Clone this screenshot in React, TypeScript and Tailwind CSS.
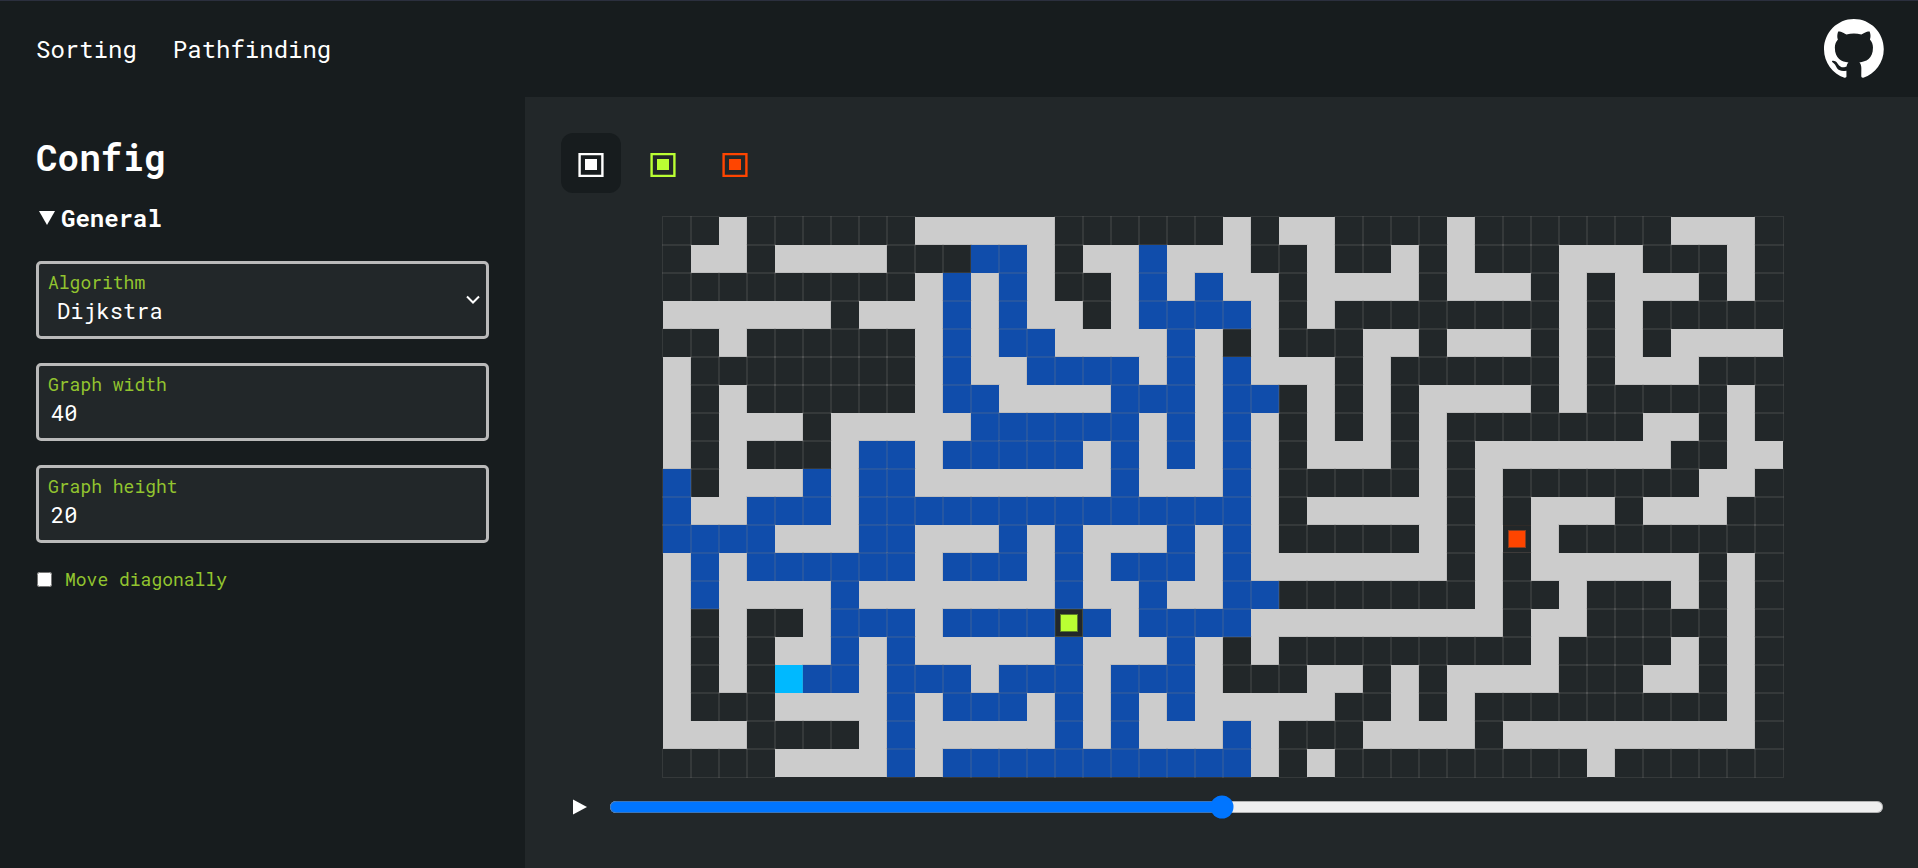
import { useState } from "react";
import type { ReactNode } from "react";

// Run-length rows: "." open, "#" wall, "o" visited, "c" current, "S" start, "T" target.
const ROWS = [
  "2. 1# 6. 5# 6. 1# 1. 2# 4. 1# 7. 3# 1.",
  "1. 2# 1. 4# 3. 2o 1# 1. 2# 1o 3# 2. 1# 2. 1# 1. 1# 3. 3# 3. 1# 1.",
  "9. 1# 1o 1# 1o 1# 2. 1# 1o 1# 1o 2# 1. 4# 1. 3# 1. 1# 1. 3# 1. 1# 1.",
  "6# 1. 3# 1o 1# 1o 2# 1. 1# 4o 1# 1. 1# 8. 1# 1. 1# 5.",
  "2. 1# 6. 1# 1o 1# 2o 4# 1o 1# 1. 1# 3. 2# 1. 3# 1. 1# 1. 1# 1. 4#",
  "1# 8. 1# 1o 2# 4o 1# 1o 1# 1o 3# 1. 1# 6. 1# 1. 3# 3.",
  "1# 1. 1# 6. 1# 2o 4# 3o 1# 2o 1. 1# 1. 1# 1. 4# 1. 1# 5. 1# 1.",
  "1# 1. 3# 1. 5# 6o 1# 1o 1# 1o 1# 1. 1# 1. 1# 1. 1# 7. 2# 1. 1# 1.",
  "1# 1. 1# 3. 1# 2o 1# 5o 1# 1o 1# 1o 1# 1o 1# 1. 3# 1. 1# 1. 7# 2. 2#",
  "1o 1. 3# 1o 1# 2o 7# 1o 3# 1o 1# 5. 1# 1. 1# 7. 2# 1.",
  "1o 2# 3o 1# 14o 1# 1. 5# 1. 1# 1. 3# 1. 3# 2.",
  "4o 3# 2o 3# 1o 1# 1o 3# 1o 1# 1o 1# 5. 1# 1. 1# 1T 1# 8.",
  "1# 1o 1# 6o 1# 3o 1# 1o 1# 3o 1# 1o 7# 1. 1# 1. 6# 1. 1# 1.",
  "1# 1o 4# 1o 7# 1o 2# 1o 2# 2o 7. 1# 2. 1# 3. 1# 1. 1# 1.",
  "1# 1. 1# 2. 1# 3o 1# 4o 1S 1o 1# 4o 9# 1. 2# 5. 1# 1.",
  "1# 1. 1# 1. 2# 1o 1# 1o 5# 1o 3# 1o 1# 1. 1# 9. 1# 4. 1# 1. 1# 1.",
  "1# 1. 1# 1. 1c 2o 1# 3o 1# 3o 1# 3o 1# 3. 2# 1. 1# 1. 4# 3. 2# 1. 1# 1.",
  "1# 3. 4# 1o 1# 3o 1# 1o 1# 1o 1# 1o 5# 2. 1# 1. 1# 9. 1# 1.",
  "3# 4. 1# 1o 5# 1o 1# 1o 3# 1o 1# 3. 4# 1. 9# 1.",
  "4. 4# 1o 1# 11o 1# 1. 1# 9. 1# 6.",
];

const MAZE = ROWS.map((row) =>
  row
    .split(" ")
    .map((run) => run.slice(-1).repeat(parseInt(run, 10)))
    .join(""),
);

const OUTLINE = "outline outline-1 outline-[#80808033]";

const CELL: Record<string, string> = {
  ".": OUTLINE,
  "#": "bg-[#cccccc]",
  o: `bg-[#104dab] ${OUTLINE}`,
  c: "bg-[#00b9ff]",
  S: `grid place-items-center border border-[#343b2c] bg-[#222729] ${OUTLINE}`,
  T: "grid place-items-center border-y border-[#2e2a28] bg-[#222729]",
};

function visitedEdges(r: number, c: number) {
  const left = c > 0 && MAZE[r][c - 1] === "o";
  const top = r > 0 && MAZE[r - 1][c] === "o";
  if (left && top) return "shadow-[inset_1px_1px_#80808033]";
  if (left) return "shadow-[inset_1px_0_#80808033]";
  if (top) return "shadow-[inset_0_1px_#80808033]";
  return "";
}

function Maze() {
  return (
    <div className="mx-auto grid w-max grid-cols-[repeat(40,28px)]">
      {MAZE.map((row, r) =>
        row.split("").map((kind, c) => (
          <div
            key={`${r}-${c}`}
            className={`h-7 w-7 ${CELL[kind]} ${kind === "o" ? visitedEdges(r, c) : ""}`}
          >
            {kind === "S" && <div className="size-[18px] border border-[#5c7f2a] bg-[#baff33]" />}
            {kind === "T" && <div className="size-[18px] border border-[#8a3c1e] bg-[#ff4500]" />}
          </div>
        )),
      )}
    </div>
  );
}

const TOOLS = [
  { name: "Wall", color: "text-white" },
  { name: "Start", color: "text-[#baff33]" },
  { name: "Target", color: "text-[#ff4500]" },
];

function Field({ id, label, children }: { id: string; label: string; children: ReactNode }) {
  return (
    <div className="relative flex flex-col gap-px rounded-[5px] border-3 border-[#bababa] bg-[#222729] px-[9px] pt-[6px] pb-[9px]">
      <label htmlFor={id} className="text-[18px] leading-6 text-[#92c42f]">
        {label}
      </label>
      {children}
    </div>
  );
}

export default function App() {
  const [tool, setTool] = useState("Wall");
  return (
    <div className="flex min-h-screen flex-col bg-[#171c1e] font-['Roboto_Mono','Liberation_Mono',monospace] text-white">
      <header className="flex h-[97px] items-center justify-between border-t border-[#2b2f3e] pr-[34px] pl-9">
        <nav className="flex gap-9 text-2xl">
          <a href="#sorting">Sorting</a>
          <a href="#pathfinding">Pathfinding</a>
        </nav>
        <a href="#github" aria-label="GitHub">
          <svg viewBox="0 0 98 98" className="size-[60px]" fill="currentColor" aria-hidden="true">
            <path d="M48.854 0C21.839 0 0 22 0 49.217c0 21.756 13.993 40.172 33.405 46.69 2.427.49 3.316-1.059 3.316-2.362 0-1.141-.08-5.052-.08-9.127-13.59 2.934-16.42-5.867-16.42-5.867-2.184-5.704-5.42-7.17-5.42-7.17-4.448-3.015.324-3.015.324-3.015 4.934.326 7.523 5.052 7.523 5.052 4.367 7.496 11.404 5.378 14.235 4.074.404-3.178 1.699-5.378 3.074-6.6-10.839-1.141-22.243-5.378-22.243-24.283 0-5.378 1.94-9.778 5.014-13.2-.485-1.222-2.184-6.275.486-13.038 0 0 4.125-1.304 13.426 5.052a46.97 46.97 0 0 1 12.214-1.63c4.125 0 8.33.571 12.213 1.63 9.302-6.356 13.427-5.052 13.427-5.052 2.67 6.763.97 11.816.485 13.038 3.155 3.422 5.015 7.822 5.015 13.2 0 18.905-11.404 23.06-22.324 24.283 1.78 1.548 3.316 4.481 3.316 9.126 0 6.6-.08 11.897-.08 13.526 0 1.304.89 2.853 3.316 2.364 19.412-6.52 33.405-24.935 33.405-46.691C97.707 22 75.788 0 48.854 0z" />
          </svg>
        </a>
      </header>

      <div className="flex flex-1">
        <aside className="w-[525px] shrink-0 p-9">
          <h1 className="text-[36px] leading-12 font-bold">Config</h1>
          <details open className="mt-[21px] [&>summary]:list-none">
            <summary className="flex items-center gap-[6px] text-2xl leading-8 font-bold">
              <svg viewBox="0 0 16 14" className="ml-[3px] h-[14px] w-4" fill="currentColor" aria-hidden="true">
                <path d="M0 0h16L8 14Z" />
              </svg>
              General
            </summary>
            <div className="mt-[27px] flex flex-col gap-6">
              <Field id="algorithm" label="Algorithm">
                <select
                  id="algorithm"
                  className="h-8 appearance-none bg-transparent pl-[9px] text-[22px] leading-8 outline-none"
                >
                  <option>Dijkstra</option>
                </select>
                <svg
                  viewBox="0 0 14 10"
                  className="pointer-events-none absolute top-[31px] right-[6px] h-[10px] w-[14px]"
                  fill="none"
                  stroke="currentColor"
                  strokeWidth="2"
                  aria-hidden="true"
                >
                  <path d="M1 1.5l6 6 6-6" />
                </svg>
              </Field>
              <Field id="graph-width" label="Graph width">
                <input
                  id="graph-width"
                  defaultValue="40"
                  className="h-8 bg-transparent pl-[3px] text-[22px] leading-8 outline-none"
                />
              </Field>
              <Field id="graph-height" label="Graph height">
                <input
                  id="graph-height"
                  defaultValue="20"
                  className="h-8 bg-transparent pl-[3px] text-[22px] leading-8 outline-none"
                />
              </Field>
              <div className="flex h-6 items-center gap-[13px]">
                <input id="diagonal" type="checkbox" className="ml-px size-[15px]" />
                <label htmlFor="diagonal" className="text-[18px] leading-6 text-[#92c42f]">
                  Move diagonally
                </label>
              </div>
            </div>
          </details>
        </aside>

        <main className="flex min-w-0 flex-1 flex-col bg-[#222729] pt-9 pr-[33px] pb-9 pl-9">
          <div className="flex gap-3">
            {TOOLS.map(({ name, color }) => (
              <button
                key={name}
                type="button"
                aria-label={name}
                aria-pressed={tool === name}
                onClick={() => setTool(name)}
                className={`grid size-[60px] place-items-center rounded-xl pt-1 ${color} ${tool === name ? "bg-[#171c1e]" : ""}`}
              >
                <svg viewBox="0 0 26 24" className="h-6 w-[26px]" aria-hidden="true">
                  <path d="M1.6 1h22.8v22H1.6Z" fill="none" stroke="currentColor" strokeWidth="2.4" />
                  <path d="M7 6h12v11H7Z" fill="currentColor" />
                </svg>
              </button>
            ))}
          </div>
          <div className="mt-6">
            <Maze />
          </div>
          <div className="mt-3 flex h-9 items-center gap-[10px]">
            <button type="button" aria-label="Play" className="grid h-9 w-[38px] place-items-center">
              <svg viewBox="0 0 14 16" className="h-4 w-[14px]" fill="currentColor" aria-hidden="true">
                <path d="M0 0.5 14 8 0 15.5Z" />
              </svg>
            </button>
            <input
              type="range"
              aria-label="Progress"
              min={0}
              max={1000}
              defaultValue={481}
              className="mr-px min-w-0 flex-1 [zoom:1.5]"
            />
          </div>
        </main>
      </div>
    </div>
  );
}
